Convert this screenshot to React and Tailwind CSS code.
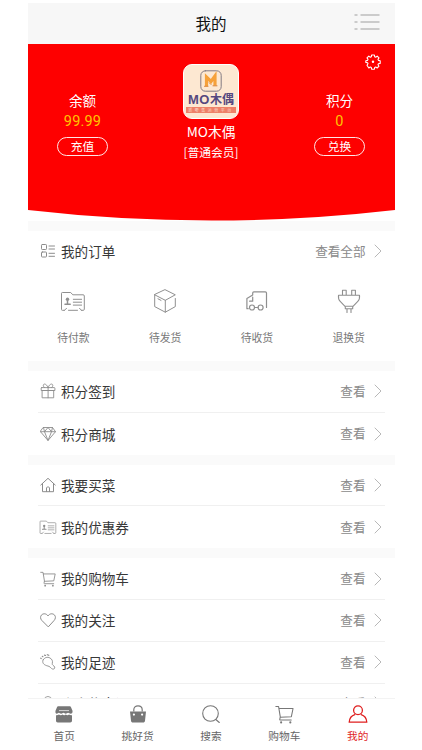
const svgProps = {
  fill: 'none',
  stroke: 'currentColor',
  strokeLinecap: 'round',
  strokeLinejoin: 'round',
};

function GearIcon() {
  return (
    <svg viewBox="0 0 16 16" className="w-4 h-4" {...svgProps} strokeWidth="1.1">
      <path d="M6.6 1h2.8l.3 1.8 1 .4 1.5-1.1 1.8 1.8-1 1.5.4 1 1.8.3v2.7l-1.8.3-.4 1 1 1.5-1.8 1.8-1.5-1-1 .4-.3 1.8H6.6l-.3-1.8-1-.4-1.5 1L2 11.2l1-1.5-.4-1L.8 8.4V6.7l1.8-.3.4-1-1-1.5 1.8-1.8 1.5 1.1 1-.4z" />
      <circle cx="8" cy="7.700" r="1.200" fill="currentColor" stroke="none" />
    </svg>
  );
}

function MenuIcon() {
  return (
    <svg viewBox="0 0 26 16" className="w-[26px] h-4 text-[#a0a0a0]" {...svgProps} strokeLinecap="butt" strokeWidth="1.2">
      <path d="M.5 1h3M6.500 1h19M.5 8h3M6.500 8h19M.5 15h3M6.500 15h19" />
    </svg>
  );
}

function ListIcon() {
  return (
    <svg viewBox="0 0 16 16" className="w-4 h-4" {...svgProps}>
      <rect x="1.500" y="1.500" width="5" height="5" rx=".8" />
      <rect x="1.500" y="9" width="5" height="5" rx=".8" />
      <path d="M9 3h5.500M9 6h5.500M9 10.300h5.500M9 13.300h5.500" />
    </svg>
  );
}

function CardIcon({ className }) {
  return (
    <svg viewBox="0 0 26 22" className={className} {...svgProps}>
      <path d="M4.500 20.300H2.300a.8.8 0 0 1-.8-.8V3.300c0-.5.300-.8.8-.8h8.400l2.100 2.300h10.300c.8 0 1.200.4 1.200 1.200v13.300c0 .7-.4 1-1 1h-2M4.500 20.300l2-2M8.500 20.300h9M19.500 18.300l2 2" />
      <circle cx="7.500" cy="9.300" r="1.700" fill="currentColor" stroke="none" />
      <path d="M7.500 10v3.500M5 14.300h5.200" strokeWidth="1.500" />
      <path d="M13.300 9.300h8.300M13.300 12.200h8.300M13.300 15.100h8.300" />
    </svg>
  );
}

function BoxIcon() {
  return (
    <svg viewBox="0 0 24 24" className="w-6 h-6" {...svgProps}>
      <path d="M12.300.8 22.300 5.800 12.300 11.300 1.700 5.800zM1.700 5.800v11.800l10.600 5.600 10-5.600V9.500M12.300 11.300v11.900M5 9.800l3 1.600" />
    </svg>
  );
}

function TruckIcon() {
  return (
    <svg viewBox="0 0 24 22" className="w-6 h-[22px]" {...svgProps} strokeWidth="1.200">
      <path d="M3.200 18.700H1.900v-10.200l5.800-3.500V3c0-.7.400-1.200 1.200-1.200h11.400c.7 0 1.200.4 1.200 1.200v14.500M7.700 7v4.200H4.600" />
      <circle cx="7" cy="17.500" r="2.500" />
      <circle cx="15.600" cy="17.500" r="2.500" />
      <path d="M9.700 17.500h3.300" />
    </svg>
  );
}

function PlugIcon() {
  return (
    <svg viewBox="0 0 24 26" className="w-6 h-[26px]" {...svgProps} strokeWidth="1.100">
      <path d="M5.500 7V2.200h3.700V7M14.700 7V2.200h3.700V7M1.500 7.300h21c.3 2.500-.1 4.600-1.700 6.100L16 18.300H8l-4.800-4.900C1.600 11.900 1.200 9.800 1.500 7.300z" />
      <path d="M8.300 18.500v2.300h7.400v-2.300M10 21v3.500M14 21v3.500" />
    </svg>
  );
}

function GiftIcon() {
  return (
    <svg viewBox="0 0 16 16" className="w-4 h-4" {...svgProps} strokeWidth=".9">
      <path d="M1.800 4.600h12.500c.4 0 .6.200.6.600v2.300H1.200V5.200c0-.4.200-.6.600-.6zM2.500 7.500h11.200v7.300H2.500zM8.100 4.600v10.200M8 4.600C6.700.6 3.500.2 3.300 2.300c-.1 1 .7 1.800 1.300 2.300M8.100 4.600c1.300-4 4.500-4.400 4.700-2.300.1 1-.7 1.800-1.300 2.300" />
    </svg>
  );
}

function DiamondIcon() {
  return (
    <svg viewBox="0 0 16 16" className="w-4 h-4" {...svgProps} strokeWidth=".9">
      <path d="M3.500 1.500h9l3 4.200L8 14.500.5 5.700zM.5 5.700h15M3.500 1.500l1 4.200L8 14.500l3.500-8.800 1-4.200M4.500 5.700 8 1.500l3.500 4.200" />
    </svg>
  );
}

function HouseIcon() {
  return (
    <svg viewBox="0 0 16 16" className="w-4 h-4" {...svgProps}>
      <path d="M.8 8 8 1.300 15.200 8M2.500 6.500v8.200h11V6.500M6.500 14.500V11c0-.7.500-1 1.500-1s1.500.3 1.500 1v3.500" />
    </svg>
  );
}

function CartIcon({ className }) {
  return (
    <svg viewBox="0 0 18 18" className={className} {...svgProps}>
      <path d="M.8 1.500h2.600L5 11.300l-.5 2.300c-.1.500.1.700.6.700h10.300M3.800 3.300h13.300l-1.600 7.800L5 11.600" />
      <circle cx="5.800" cy="16.500" r="1" fill="currentColor" stroke="none" />
      <circle cx="14.500" cy="16.500" r="1" fill="currentColor" stroke="none" />
    </svg>
  );
}

function HeartIcon() {
  return (
    <svg viewBox="0 0 16 16" className="w-4 h-4" {...svgProps}>
      <path d="M8 14.600 1.800 8.400C.3 6.900.2 4.500 1.400 3.100 3.200 1.100 6.500 1.400 8 4c1.500-2.600 4.800-2.900 6.600-.9 1.200 1.400 1.100 3.800-.4 5.300z" />
    </svg>
  );
}

function FootIcon() {
  return (
    <svg viewBox="0 0 16 16" className="w-4 h-4" {...svgProps} strokeWidth=".9">
      <path d="M3.200 5.800C4.500 3.400 7.500 2.600 10 4c2.300 1.300 2.800 3.200 2.300 5.300-.3 1.300.4 1.700 1.500 2.600 1.600 1.400 1 3-.4 3.200-1.400.2-2.300-1.100-3.400-2.100-1.200-1.100-2.800-.9-4.500-1.800C3 10 2 8 3.200 5.800z" />
      <path d="M.8 4.200l.4.300M2.300 2.300l.6.400M4.500 1.100l1 .4M7.300.7l1.500.6" strokeWidth="1.200" />
    </svg>
  );
}

function ProfileIcon({ className, strokeWidth = 1 }) {
  return (
    <svg viewBox="0 0 20 18" className={className} {...svgProps} strokeWidth={strokeWidth}>
      <circle cx="10" cy="5.200" r="4.400" />
      <path d="M6.800 9.600c-3.400 1-5.300 3.300-5.600 7.600h17.600c-.3-4.300-2.200-6.600-5.600-7.600" />
    </svg>
  );
}

function ShopIcon() {
  return (
    <svg viewBox="0 0 18 18" className="w-[18px] h-[18px]" fill="currentColor">
      <path d="M3.500 1.200h11c.8 0 1.200.3 1.500 1l1.500 3.600c.3 2-.5 3-1.800 3s-1.600-1-2.600-1-1.300 1-2.400 1-1.200-1-2.200-1-1.200 1-2.300 1-1.500-1-2.400-1-.9 1-2 1S.2 7.800.5 5.800L2 2.200c.3-.7.700-1 1.500-1z" />
      <path d="M1 10.200c1.300.1 2.200-.1 3-.6.900.7 2.600.8 3.500 0 .8.700 2.500.7 3.300 0 .9.700 2.300.7 3.200 0 .8.500 1.700.7 3 .6v5.300c0 1.300-.6 1.900-1.800 1.900H2.800c-1.200 0-1.800-.6-1.800-1.900z" />
      <path d="M4 5.600h10" stroke="#fff" strokeWidth=".7" />
    </svg>
  );
}

function BagIcon() {
  return (
    <svg viewBox="0 0 18 18" className="w-[18px] h-[18px]" fill="currentColor">
      <path d="M1 6.500h16l-1 9.200c-.1 1.200-.8 1.800-2 1.800H4c-1.200 0-1.900-.6-2-1.800z" />
      <path d="M4.800 6.500V4.800C4.800 2.500 6.500.8 9 .8s4.200 1.700 4.200 4v1.700" fill="none" stroke="currentColor" strokeWidth="1.200" />
      <circle cx="4.900" cy="9.600" r="1.100" fill="#fff" />
      <circle cx="13.100" cy="9.600" r="1.100" fill="#fff" />
    </svg>
  );
}

function SearchIcon() {
  return (
    <svg viewBox="0 0 18 18" className="w-[18px] h-[18px]" {...svgProps} strokeWidth="1.100">
      <circle cx="8.500" cy="8.500" r="7.800" />
      <path d="M13.800 14.500l3.500 3" />
    </svg>
  );
}

function Arrow() {
  return (
    <svg viewBox="0 0 8 14" className="w-2 h-3.5 text-[#b8b8b8]" {...svgProps}>
      <path d="M1 1l6 6-6 6" />
    </svg>
  );
}

function Logo() {
  return (
    <div className="w-14 h-[55px] rounded-[9px] border-[1.5px] border-white bg-[#fde8d2] flex flex-col items-center overflow-hidden">
      <svg viewBox="0 0 22 22" className="w-[22px] h-[22px] mt-[5px] shrink-0" {...svgProps}>
        <rect x=".8" y=".8" width="20.400" height="20.400" rx="4.500" stroke="#827a83" />
        <path d="M6.500 16V7l4.500 4.500L15 6v9.500" stroke="#f6a13a" strokeWidth="3.200" strokeLinecap="butt" strokeLinejoin="miter" />
        <path d="M4.500 16.300h3.500M13 15.800h4M9.300 12.800l1.700 1.700" stroke="#d98238" />
      </svg>
      <div className="shrink-0 h-[13px] mt-px leading-[13px] font-bold text-[#55487f] whitespace-nowrap flex">
        <span className="font-['Liberation_Sans','Noto_Sans_CJK_SC',sans-serif] text-[13px] tracking-[0.500px]">MO</span>
        <span className="text-[12px] -mt-px">木偶</span>
      </div>
      <div className="shrink-0 w-[50px] h-[6px] mt-px bg-[#ee8168] text-[4px] leading-[6px] text-[#fbd8c8] text-center tracking-[2.500px] whitespace-nowrap overflow-hidden">
        新零售运营平台
      </div>
    </div>
  );
}

const ORDERS = [
  { label: '待付款', icon: <CardIcon className="w-[26px] h-[22px]" /> },
  { label: '待发货', icon: <BoxIcon /> },
  { label: '待收货', icon: <TruckIcon /> },
  { label: '退换货', icon: <PlugIcon /> },
];

const GROUPS = [
  [
    { label: '积分签到', icon: <GiftIcon /> },
    { label: '积分商城', icon: <DiamondIcon /> },
  ],
  [
    { label: '我要买菜', icon: <HouseIcon /> },
    { label: '我的优惠券', icon: <CardIcon className="w-[18px] h-4" /> },
  ],
  [
    { label: '我的购物车', icon: <CartIcon className="w-4 h-4" /> },
    { label: '我的关注', icon: <HeartIcon /> },
    { label: '我的足迹', icon: <FootIcon /> },
    { label: '个人信息设置', icon: <ProfileIcon className="w-4 h-4" /> },
  ],
];

const TABS = [
  { label: '首页', icon: <ShopIcon /> },
  { label: '挑好货', icon: <BagIcon /> },
  { label: '搜索', icon: <SearchIcon /> },
  { label: '购物车', icon: <CartIcon className="w-[19px] h-[19px]" /> },
  { label: '我的', icon: <ProfileIcon className="w-5 h-[18px]" strokeWidth={1.3} />, active: true },
];

function Row({ label, icon, action = '查看' }) {
  return (
    <div className="h-full flex items-center">
      <span className="w-5 flex justify-center text-[#8c8c8c]">{icon}</span>
      <span className="ml-[3.500px] text-[13.600px] text-[#383838]">{label}</span>
      <span className="ml-auto mr-2 text-[12.600px] text-[#8a8a8a]">{action}</span>
      <Arrow />
    </div>
  );
}

function Balance({ title, value, button }) {
  return (
    <div className="w-[110px] flex flex-col items-center pt-[46px]">
      <div className="text-[13.600px] leading-5">{title}</div>
      <div className="text-[14.500px] leading-[24px] text-[#ffc400] font-['Roboto','Noto_Sans_CJK_SC',sans-serif] tracking-[0.200px]">{value}</div>
      <div className="w-[51px] h-[19px] mt-[3px] pb-px rounded-full border border-white/90 flex items-center justify-center text-[11.800px] leading-none">
        {button}
      </div>
    </div>
  );
}

export default function App() {
  return (
    <div className="w-[422px] h-[750px] overflow-hidden bg-white pt-[3px] pl-[27.500px] font-['Noto_Sans_CJK_SC',sans-serif]">
      <div className="w-[367px] h-[747px] flex flex-col">
        <header className="h-[41px] shrink-0 bg-[#f7f7f7] grid grid-cols-[1fr_auto_1fr] items-center">
          <span />
          <h1 className="text-[15.500px] leading-5 pb-0.5 text-[#111]">我的</h1>
          <div className="justify-self-end mr-[15px] -mt-[3px]"><MenuIcon /></div>
        </header>

        <main className="flex-1 min-h-0 overflow-hidden">
          <section className="relative h-[177px] text-white">
            <svg viewBox="0 0 367 177" className="absolute inset-0 w-full h-full" preserveAspectRatio="none">
              <path d="M0 0h367v166Q183.500 187 0 166z" fill="#fe0000" />
            </svg>
            <div className="relative flex justify-between">
              <Balance title="余额" value="99.99" button="充值" />
              <div className="flex flex-col items-center pt-5">
                <Logo />
                <div className="text-[13.700px] leading-5 mt-[2px]">MO木偶</div>
                <div className="text-[11.800px] leading-5 mt-px">[普通会员]</div>
              </div>
              <Balance title="积分" value="0" button="兑换" />
            </div>
            <div className="absolute right-[14px] top-[10px]"><GearIcon /></div>
          </section>

          <div className="h-[9.500px] bg-[#fafafa]" />
          <section className="h-[130.500px]">
            <div className="h-[41.500px] pl-2.5 pr-[13px]">
              <Row label="我的订单" icon={<ListIcon />} action="查看全部" />
            </div>
            <div className="grid grid-cols-4">
              {ORDERS.map(o => (
                <div key={o.label} className="flex flex-col items-center text-[#8f8f8f]">
                  <div className="h-[57px] flex items-center">{o.icon}</div>
                  <span className="text-[10.800px] leading-4 text-[#787878]">{o.label}</span>
                </div>
              ))}
            </div>
          </section>

          {GROUPS.map((rows, i) => (
            <section key={i} className="border-t-[10px] border-[#fafafa]">
              {rows.map((row, j) => (
                <div key={row.label} className="pl-2.5 pr-2.5">
                  <div className={`pr-[3px] ${j < 3 ? 'h-[41.800px]' : 'h-[39px]'} ${j < rows.length - 1 ? 'border-b border-[#f0f0f0]' : ''}`}>
                    <Row {...row} />
                  </div>
                </div>
              ))}
            </section>
          ))}
        </main>

        <nav className="h-[52px] shrink-0 border-t border-[#f3f3f3] bg-white grid grid-cols-5">
          {TABS.map(tab => (
            <div key={tab.label} className={`flex flex-col items-center pt-[5px] ${tab.active ? 'text-[#df1f1f]' : 'text-[#777]'}`}>
              <div className="h-5 flex items-center">{tab.icon}</div>
              <span className={`mt-[3.500px] text-[10.700px] leading-4 ${tab.active ? '' : 'text-[#666]'}`}>{tab.label}</span>
            </div>
          ))}
        </nav>
      </div>
    </div>
  );
}
